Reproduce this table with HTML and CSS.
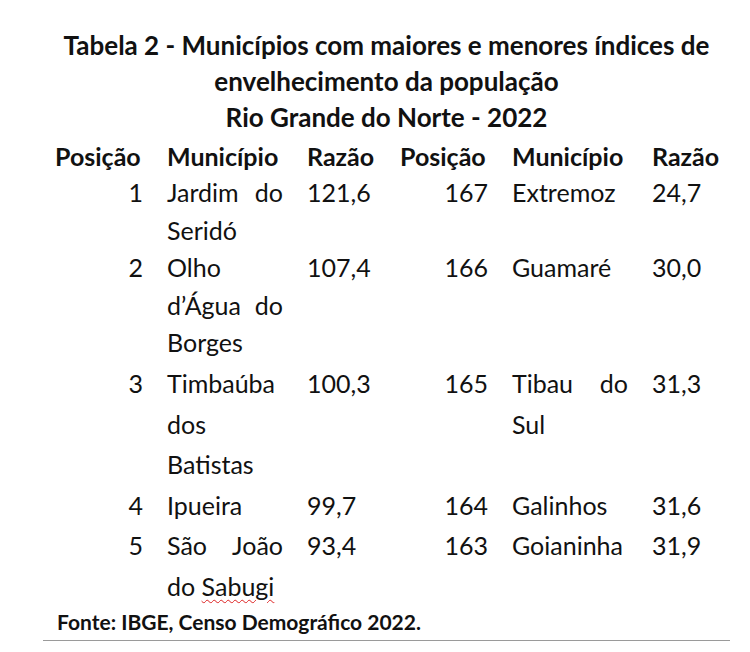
FILE: index.html
```html
<!DOCTYPE html>
<html lang="pt-BR">
<head>
<meta charset="utf-8">
<title>Tabela 2</title>
<link rel="stylesheet" href="styles.css">
</head>
<body>
<div class="page">
  <h1 class="title">Tabela 2 - Municípios com maiores e menores índices de<br>envelhecimento da população<br>Rio Grande do Norte - 2022</h1>
  <table class="tbl">
    <colgroup>
      <col class="c-pos"><col class="c-mun"><col class="c-raz">
      <col class="c-pos2"><col class="c-mun"><col class="c-raz">
    </colgroup>
    <thead>
      <tr><th>Posição</th><th>Município</th><th>Razão</th><th>Posição</th><th>Município</th><th>Razão</th></tr>
    </thead>
    <tbody>
      <tr class="tight">
        <td class="num">1</td><td><span class="ln jus">Jardim do</span><span class="ln">Seridó</span></td><td>121,6</td>
        <td class="num">167</td><td><span class="ln">Extremoz</span></td><td>24,7</td>
      </tr>
      <tr class="tight">
        <td class="num">2</td><td><span class="ln">Olho</span><span class="ln jus">d’Água do</span><span class="ln">Borges</span></td><td>107,4</td>
        <td class="num">166</td><td><span class="ln">Guamaré</span></td><td>30,0</td>
      </tr>
      <tr class="loose first-loose">
        <td class="num">3</td><td><span class="ln">Timbaúba</span><span class="ln">dos</span><span class="ln">Batistas</span></td><td>100,3</td>
        <td class="num">165</td><td><span class="ln jus">Tibau do</span><span class="ln">Sul</span></td><td>31,3</td>
      </tr>
      <tr class="loose">
        <td class="num">4</td><td><span class="ln">Ipueira</span></td><td>99,7</td>
        <td class="num">164</td><td><span class="ln">Galinhos</span></td><td>31,6</td>
      </tr>
      <tr class="loose">
        <td class="num">5</td><td><span class="ln jus">São João</span><span class="ln">do <span class="spell">Sabugi</span></span></td><td>93,4</td>
        <td class="num">163</td><td><span class="ln">Goianinha</span></td><td>31,9</td>
      </tr>
    </tbody>
  </table>
  <p class="source">Fonte: IBGE, Censo Demográfico 2022.</p>
  <div class="rule"></div>
</div>
</body>
</html>
```
FILE: styles.css
```css
html, body {
  margin: 0;
  padding: 0;
  background: #ffffff;
}
body {
  font-family: Lato, "Liberation Sans", sans-serif;
  color: #111111;
}
.page {
  width: 687px;
  padding: 27px 0 0 43px;
}
.title {
  margin: 0;
  font-size: 26px;
  font-weight: 700;
  line-height: 36px;
  text-align: center;
}
.tbl {
  margin-top: 4px;
  border-collapse: collapse;
  table-layout: fixed;
  width: 687px;
  font-size: 25px;
}
.c-pos { width: 112px; }
.c-mun { width: 140px; }
.c-raz { width: 93px; }
.c-pos2 { width: 112px; }
.tbl th, .tbl td {
  padding: 0 12px;
  vertical-align: top;
  text-align: left;
}
.tbl th {
  font-weight: 700;
  line-height: 35px;
}
.tbl tr.tight td {
  line-height: 37.5px;
}
.tbl tr.loose td {
  line-height: 40.5px;
}
.tbl tr.first-loose td {
  padding-top: 1.5px;
}
.tbl td.num {
  text-align: right;
}
.ln {
  display: block;
}
.ln.jus {
  text-align: justify;
  text-align-last: justify;
}
.spell {
  text-decoration: underline wavy #d22;
  text-decoration-thickness: 1px;
  text-underline-offset: 3px;
}
.source {
  margin: 0;
  padding-left: 14px;
  font-size: 21px;
  font-weight: 700;
  line-height: 32px;
}
.rule {
  margin-top: 2px;
  height: 1px;
  background: #9a9a9a;
}
```
